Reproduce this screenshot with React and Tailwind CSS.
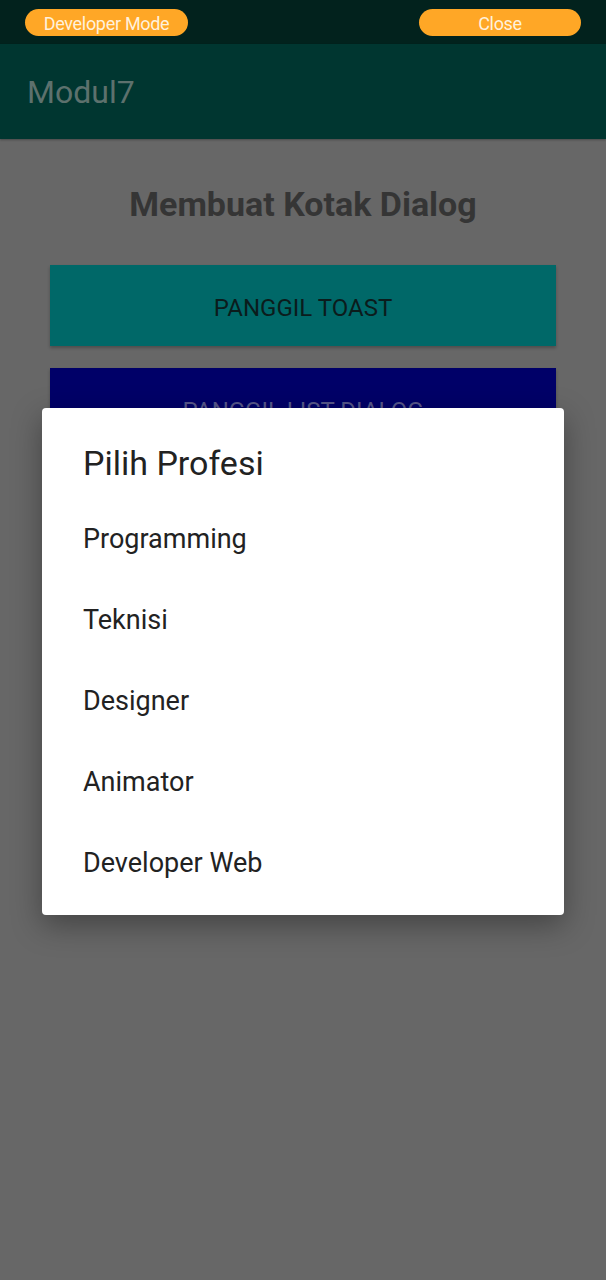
export default function App() {
  const items = ["Programming", "Teknisi", "Designer", "Animator", "Developer Web"];
  return (
    <div className="relative w-[606px] h-[1280px] bg-[#676767] overflow-hidden" style={{ fontFamily: "Roboto, 'Noto Sans', sans-serif" }}>
      <div className="h-[44px] bg-[#02221d] flex items-center justify-between px-[25px]">
        <div className="w-[163px] h-[27px] rounded-full bg-[#ffa726] flex items-center justify-center pt-[2px] text-[18px] tracking-[-0.3px] text-[#fff1dc]">Developer Mode</div>
        <div className="w-[162px] h-[27px] rounded-full bg-[#ffa726] flex items-center justify-center pt-[2px] text-[18px] tracking-[-0.3px] text-[#fff1dc]">Close</div>
      </div>
      <div className="h-[95px] bg-[#003630] flex items-center px-[27px] shadow-[0_1px_2px_rgba(0,0,0,0.3)]">
        <span className="text-[32px] text-[#5d716d] leading-none">Modul7</span>
      </div>
      <div className="flex flex-col items-center px-[50px]">
        <div className="mt-[45px] text-[34px] font-bold text-[#353535] leading-[40px]">Membuat Kotak Dialog</div>
        <div className="mt-[41px] w-full h-[81px] bg-[#006868] flex items-center justify-center pt-[5px] text-[24px] text-[#0b1c1c] shadow-[0_2px_3px_rgba(0,0,0,0.25)]">PANGGIL TOAST</div>
        <div className="mt-[22px] w-full h-[81px] bg-[#000068] flex items-center justify-center pt-[5px] text-[24px] text-[#56568a] shadow-[0_2px_3px_rgba(0,0,0,0.25)]">PANGGIL LIST DIALOG</div>
      </div>
      <div className="absolute left-[42px] top-[408px] w-[522px] bg-white rounded-[4px] shadow-[0_10px_30px_rgba(0,0,0,0.35)] pt-[36px] pb-[12px]">
        <div className="px-[41px] text-[34px] leading-[38px] text-[#222222] pb-[16px]">Pilih Profesi</div>
        {items.map((t) => (
          <div key={t} className="h-[81px] flex items-center px-[41px] pt-[2px] text-[27px] text-[#222222]">{t}</div>
        ))}
      </div>
    </div>
  );
}
